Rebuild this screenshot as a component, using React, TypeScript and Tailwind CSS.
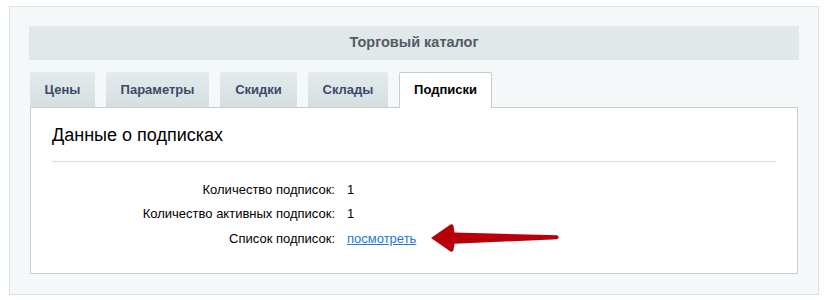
export default function App() {
  const tabs = ['Цены', 'Параметры', 'Скидки', 'Склады'];
  const widths = ['w-[65px]', 'w-[103px]', 'w-[77px]', 'w-[80px]'];

  return (
    <div className="relative h-[300px] w-[830px] bg-white pl-[9px] pt-[6px] font-['Liberation_Sans',Arial,sans-serif]">
      <div className="w-[810px] border border-[#dbe2e5] bg-[#f5f8f9] px-[19px] pt-[19px] pb-[20px]">
        <div className="flex h-[34px] items-center justify-center bg-[#e0e8ea] text-[14.5px] font-bold text-[#535c63]">
          Торговый каталог
        </div>

        <div className="mt-[12px] flex gap-[11px] pl-px">
          {tabs.map((t, i) => (
            <div
              key={t}
              className={`${widths[i]} flex h-[35px] items-center justify-center rounded-t-[2px] bg-gradient-to-b from-[#e4ebed] to-[#d5dee1] text-[13px] font-bold text-[#3b4a6a]`}
            >
              {t}
            </div>
          ))}
          <div className="relative z-10 -mb-px flex h-[36px] w-[93px] items-center justify-center rounded-t-[2px] border border-b-0 border-[#c6cdd0] bg-white pb-px text-[13px] font-bold text-black">
            Подписки
          </div>
        </div>

        <div className="mx-px border border-[#c6cdd0] bg-white px-[21px] pt-[16px] pb-[22px]">
          <h2 className="text-[18px] leading-[22px] text-black">Данные о подписках</h2>
          <div className="mt-[15px] mb-[15px] h-px bg-[#dcdfe0]" />
          <div className="flex flex-col text-[13px] text-black">
            <div className="flex h-[24.5px] items-center">
              <span className="w-[283px] text-right">Количество подписок:</span>
              <span className="ml-[12px]">1</span>
            </div>
            <div className="flex h-[24.5px] items-center">
              <span className="w-[283px] text-right">Количество активных подписок:</span>
              <span className="ml-[12px]">1</span>
            </div>
            <div className="flex h-[24.5px] items-center">
              <span className="w-[283px] text-right">Список подписок:</span>
              <a href="#" className="ml-[12px] text-[#2675d7] underline">посмотреть</a>
            </div>
          </div>
        </div>
      </div>

      <svg className="pointer-events-none absolute left-0 top-0" width="830" height="300" viewBox="0 0 830 300">
        <path
          d="M431,238 L450.5,224.5 Q453,223.5 453.5,226 L454.5,232.5 L557,235.3 Q560.5,237 557,239.3 L454.5,243.8 L453.5,250 Q453,252.5 450.5,251.5 Z"
          fill="#b8000b"
        />
      </svg>
    </div>
  );
}
